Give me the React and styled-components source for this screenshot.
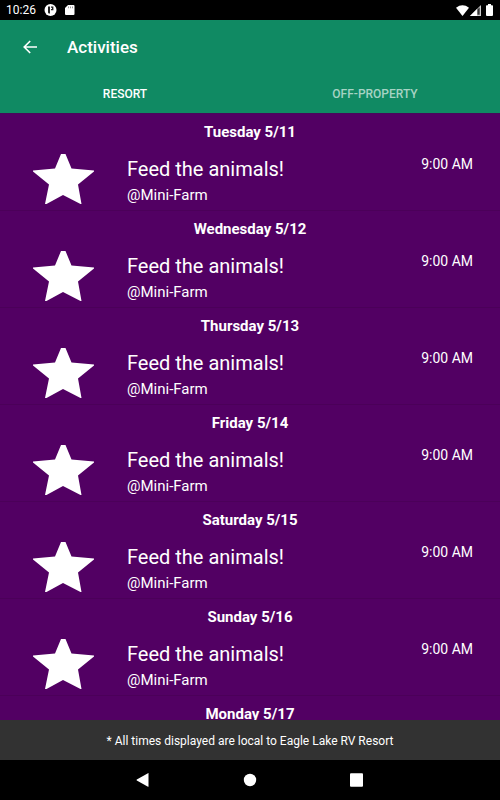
import React from "react";
import styled, { createGlobalStyle } from "styled-components";

const GlobalStyle = createGlobalStyle`
  * { box-sizing: border-box; }
  body { margin: 0; background: #000; }
  button { font: inherit; color: inherit; background: none; border: 0; padding: 0; cursor: pointer; }
  svg { display: block; }
`;

const Screen = styled.div`
  display: flex;
  flex-direction: column;
  height: 100vh;
  font-family: Roboto, "Liberation Sans", sans-serif;
  color: #fff;
  background: #520063;
`;

const StatusBar = styled.div`
  flex: none;
  display: flex;
  align-items: center;
  justify-content: space-between;
  height: 20px;
  padding: 0 5px 0 6px;
  background: #000;
  font-size: 12px;
  line-height: 20px;
`;

const StatusGroup = styled.div`
  display: flex;
  align-items: center;
  gap: ${(p) => p.$gap}px;
`;

const Header = styled.header`
  flex: none;
  background: #108a63;
`;

const AppBar = styled.div`
  display: flex;
  align-items: center;
  gap: 28px;
  height: 54px;
  padding: 0 21px;
`;

const BackButton = styled.button`
  width: 18px;
  height: 18px;
`;

const Title = styled.h1`
  margin: 0;
  font-size: 17px;
  line-height: 24px;
  font-weight: 500;
`;

const Tabs = styled.div`
  display: grid;
  grid-template-columns: 1fr 1fr;
  height: 39px;
`;

const Tab = styled.button`
  && {
    font-size: 12px;
    font-weight: 500;
    line-height: 16px;
    text-transform: uppercase;
    color: ${(p) => (p.$active ? "#fff" : "#a6d3c4")};
  }
`;

const List = styled.main`
  flex: 1;
  min-height: 0;
  overflow-y: auto;
  scrollbar-width: none;
  border-top: 1px solid #48095b;
`;

const Day = styled.section`
  padding-top: 8px;
  border-bottom: 1px solid #4b0059;
`;

const DayTitle = styled.h2`
  margin: 0;
  font-size: 15px;
  line-height: 20px;
  font-weight: 700;
  text-align: center;
`;

const Activity = styled.article`
  display: grid;
  grid-template-columns: 127px 1fr auto;
  align-items: start;
  padding: 12px 27px 5px 0;
`;

const StarBox = styled.div`
  padding-left: 33px;
`;

const Name = styled.div`
  font-size: 20px;
  line-height: 30px;
`;

const Place = styled.div`
  padding-top: 1px;
  font-size: 15px;
  line-height: 20px;
`;

const Time = styled.time`
  font-size: 14px;
  line-height: 20px;
`;

const Notice = styled.footer`
  flex: none;
  padding: 13px 12px 11px;
  background: #323232;
  font-size: 12px;
  line-height: 16px;
  text-align: center;
`;

const NavBar = styled.nav`
  flex: none;
  display: flex;
  justify-content: center;
  align-items: center;
  gap: 87px;
  height: 40px;
  background: #000;
`;

const NavButton = styled.button`
  width: 20px;
  height: 20px;
`;

const feeding = { name: "Feed the animals!", place: "@Mini-Farm", time: "9:00 AM" };

const days = [
  { title: "Tuesday 5/11", activities: [feeding] },
  { title: "Wednesday 5/12", activities: [feeding] },
  { title: "Thursday 5/13", activities: [feeding] },
  { title: "Friday 5/14", activities: [feeding] },
  { title: "Saturday 5/15", activities: [feeding] },
  { title: "Sunday 5/16", activities: [feeding] },
  { title: "Monday 5/17", activities: [] },
];

const Star = () => (
  <svg width="61" height="50" viewBox="0 0 61 50" fill="#fff" aria-hidden="true">
    <path d="M28 0H32.5L38.5 14.5L61 16.5V17.5L45 30.5L48.5 50H47.5L30 41L13.5 50H12L16 30.5L0 17.5V16.5L22 14.5Z" />
  </svg>
);

export default function App() {
  return (
    <Screen>
      <GlobalStyle />
      <StatusBar>
        <StatusGroup $gap={8}>
          <span>10:26</span>
          <svg width="13" height="12" viewBox="0 0 13 12" aria-hidden="true">
            <circle cx="6.5" cy="6" r="6" fill="#fff" />
            <path d="M4 2.5H6V9.5H4.6L4 8.5Z" fill="#222" />
            <path d="M7 2.5H9.4V6.2H7V5H8V3.7H7Z" fill="#222" />
          </svg>
          <svg width="10" height="10" viewBox="0 0 10 10" aria-hidden="true">
            <path d="M3 0H8.5Q9.5 0 9.5 1V9Q9.5 10 8.5 10H1Q0 10 0 9V3Z" fill="#fff" />
            <path d="M3 1.6H4V3.2H3ZM5 1.6H6V3.2H5ZM7 1.6H8V3.2H7Z" fill="#999" />
          </svg>
        </StatusGroup>
        <StatusGroup $gap={1}>
          <svg width="13" height="11" viewBox="0 0 13 11" aria-hidden="true">
            <path d="M0 2.7Q6.5 -2.2 13 2.7L6.5 11Z" fill="#fff" />
          </svg>
          <svg width="11" height="11" viewBox="0 0 11 11" aria-hidden="true">
            <path d="M0 11L11 0V11Z" fill="#ccc" />
            <path d="M0 11L7 4V11Z" fill="#fff" />
            <path d="M7.4 4.6L9.7 2.3V9.7H7.4Z" fill="#333" />
          </svg>
          <svg width="13" height="12" viewBox="0 0 13 12" aria-hidden="true">
            <path d="M6 0H9V1.2H10.2Q11 1.2 11 2V11Q11 12 10 12H5Q4 12 4 11V2Q4 1.2 4.8 1.2H6Z" fill="#fff" />
          </svg>
        </StatusGroup>
      </StatusBar>
      <Header>
        <AppBar>
          <BackButton aria-label="Back">
            <svg width="18" height="18" viewBox="0 0 18 18" fill="none" stroke="#fff" strokeWidth="1.6">
              <path d="M16 9H3.5M9.2 3L3.2 9L9.2 15" />
            </svg>
          </BackButton>
          <Title>Activities</Title>
        </AppBar>
        <Tabs role="tablist">
          <Tab role="tab" aria-selected="true" $active>Resort</Tab>
          <Tab role="tab" aria-selected="false">Off-Property</Tab>
        </Tabs>
      </Header>
      <List>
        {days.map((day) => (
          <Day key={day.title}>
            <DayTitle>{day.title}</DayTitle>
            {day.activities.map((activity) => (
              <Activity key={activity.name}>
                <StarBox><Star /></StarBox>
                <div>
                  <Name>{activity.name}</Name>
                  <Place>{activity.place}</Place>
                </div>
                <Time>{activity.time}</Time>
              </Activity>
            ))}
          </Day>
        ))}
      </List>
      <Notice>* All times displayed are local to Eagle Lake RV Resort</Notice>
      <NavBar aria-label="System navigation">
        <NavButton aria-label="Back">
          <svg width="20" height="20" viewBox="0 0 20 20" fill="#fff"><path d="M15.5 3.5V16.5Q15.5 17 15 16.8L3.8 10.5Q3.2 10 3.8 9.5L15 3.2Q15.5 3 15.5 3.5Z" /></svg>
        </NavButton>
        <NavButton aria-label="Home">
          <svg width="20" height="20" viewBox="0 0 20 20" fill="#fff"><circle cx="10" cy="10" r="6.2" /></svg>
        </NavButton>
        <NavButton aria-label="Recent apps">
          <svg width="20" height="20" viewBox="0 0 20 20" fill="#fff"><rect x="3" y="3.2" width="13" height="13.6" rx="1" /></svg>
        </NavButton>
      </NavBar>
    </Screen>
  );
}
